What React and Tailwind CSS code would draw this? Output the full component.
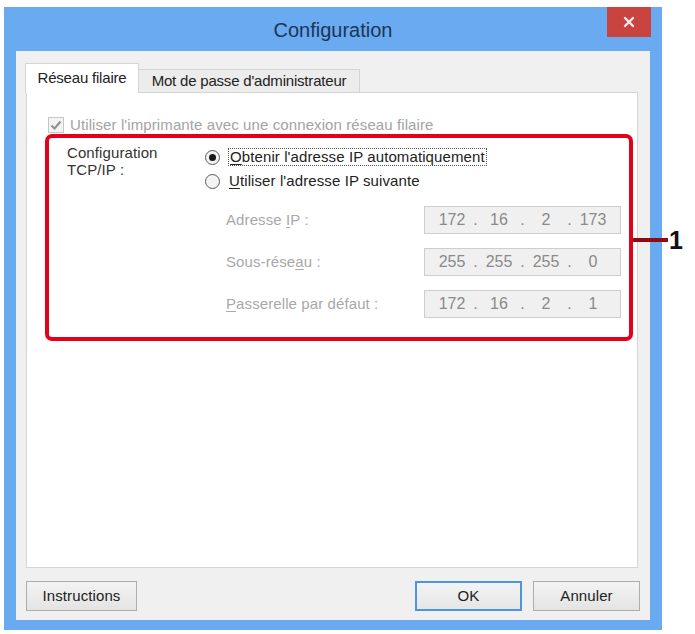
export default function App() {
  const ipRows = [
    { label: (<>Adresse <u className="underline-offset-2">I</u>P :</>), v: ["172", "16", "2", "173"] },
    { label: (<>Sous-rése<u className="underline-offset-2">a</u>u :</>), v: ["255", "255", "255", "0"] },
    { label: (<><u className="underline-offset-2">P</u>asserelle par défaut :</>), v: ["172", "16", "2", "1"] },
  ];
  return (
    <div className="relative w-[695px] h-[634px] bg-white pt-[7px] pl-[4px] font-['Liberation_Sans',Arial,sans-serif] text-[15px] tracking-[0.1px] text-[#222]">
      <div className="w-[658px] h-[623px] bg-[#6aaaf0] flex flex-col">
        {/* Title bar */}
        <div className="h-[44px] grid grid-cols-[1fr_auto_1fr] items-start">
          <div />
          <div className="leading-[46px] text-[20px] tracking-[0px] text-[#1c3556]">Configuration</div>
          <div className="flex justify-end pr-[11px]">
            <div className="w-[44px] h-[30px] bg-[#c9443f] flex items-center justify-center">
              <svg width="12" height="12" viewBox="0 0 12 12">
                <path d="M2 2 L10 10 M10 2 L2 10" stroke="#fbeaea" strokeWidth="2.4" strokeLinecap="round" />
              </svg>
            </div>
          </div>
        </div>
        {/* Client area */}
        <div className="ml-[12px] w-[634px] h-[569px] bg-[#f0f0f0] flex flex-col">
          {/* Tabs */}
          <div className="pt-[12px] pl-[9px] flex items-end -mb-px tracking-[-0.2px]">
            <div className="relative z-10 w-[114px] h-[30px] bg-white border border-b-0 border-[#d5d5d5] flex items-center justify-center text-[#222]">
              Réseau filaire
            </div>
            <div className="w-[221px] h-[24px] bg-[#ececec] border border-l-0 border-[#d5d5d5] flex items-center justify-center text-[#222]">
              Mot de passe d'administrateur
            </div>
          </div>
          {/* Panel */}
          <div className="ml-[10px] w-[612px] h-[476px] bg-white border border-[#d5d5d5] flex flex-col">
            <div className="mt-[23px] ml-[21px] h-[18px] flex items-center gap-[6px] text-[#a3a3a3]">
              <div className="w-[16px] h-[16px] border border-[#c6c6c6] bg-[#f3f3f3] flex items-center justify-center">
                <svg width="12" height="12" viewBox="0 0 12 12">
                  <path d="M1.5 6.5 L4.5 9.5 L10.5 2.5" fill="none" stroke="#8e8e8e" strokeWidth="2" />
                </svg>
              </div>
              <span>Utiliser l'imprimante avec une connexion réseau filaire</span>
            </div>
            {/* Red highlighted group */}
            <div className="ml-[18px] w-[588px] h-[207px] border-[4px] border-[#e3001b] rounded-[7px] flex">
              <div className="pl-[18px] w-[156px] pt-[6px] leading-[17px] text-[#333]">
                <div>Configuration</div>
                <div>TCP/IP :</div>
              </div>
              <div className="flex-1 pt-[7px] flex flex-col">
                <div className="h-[24px] flex items-center gap-[8px]">
                  <div className="w-[15px] h-[15px] rounded-full border border-[#5a5a5a] bg-[#f4f4f4] flex items-center justify-center">
                    <div className="w-[7px] h-[7px] rounded-full bg-[#1a1a1a]" />
                  </div>
                  <span className="border border-dotted border-[#555] px-[1px] leading-[16px] text-[#222]">
                    <u className="underline-offset-2">O</u>btenir l'adresse IP automatiquement
                  </span>
                </div>
                <div className="h-[24px] flex items-center gap-[9px]">
                  <div className="w-[15px] h-[15px] rounded-full border border-[#5a5a5a] bg-[#f4f4f4]" />
                  <span className="text-[#222]">
                    <u className="underline-offset-2">U</u>tiliser l'adresse IP suivante
                  </span>
                </div>
                <div className="mt-[13px] flex flex-col gap-[14px]">
                  {ipRows.map((r, i) => (
                    <div key={i} className="h-[28px] flex items-center">
                      <div className="pl-[21px] w-[219px] text-[#a8a8a8]">{r.label}</div>
                      <div className="w-[197px] h-[28px] border border-[#cdcdcd] bg-[#f0f0f0] flex items-center pl-[8px] text-[#8a8a8a] text-[16px] tracking-[0px]">
                        {r.v.map((n, j) => (
                          <div key={j} className="flex">
                            <span className="w-[38px] text-center">{n}</span>
                            {j < 3 && <span className="w-[9px] text-center">.</span>}
                          </div>
                        ))}
                      </div>
                    </div>
                  ))}
                </div>
              </div>
            </div>
          </div>
          {/* Buttons */}
          <div className="mt-[13px] px-[10px] flex justify-between">
            <div className="w-[111px] h-[30px] border border-[#adadad] bg-gradient-to-b from-[#f3f3f3] to-[#e4e4e4] flex items-center justify-center text-[#222]">
              Instructions
            </div>
            <div className="flex gap-[11px]">
              <div className="w-[107px] h-[30px] border-2 border-[#4f95d9] bg-gradient-to-b from-[#f3f3f3] to-[#e6e6e6] flex items-center justify-center text-[#222]">
                OK
              </div>
              <div className="w-[107px] h-[30px] border border-[#adadad] bg-gradient-to-b from-[#f3f3f3] to-[#e4e4e4] flex items-center justify-center text-[#222]">
                Annuler
              </div>
            </div>
          </div>
        </div>
      </div>
      {/* Annotation callout */}
      <div className="absolute left-[633px] top-[238px] w-[35px] h-[4px] bg-[#8f0a14]" />
      <div className="absolute left-[669px] top-[226px] text-[25px] font-bold leading-[28px] tracking-[0px] text-[#111]">1</div>
    </div>
  );
}
